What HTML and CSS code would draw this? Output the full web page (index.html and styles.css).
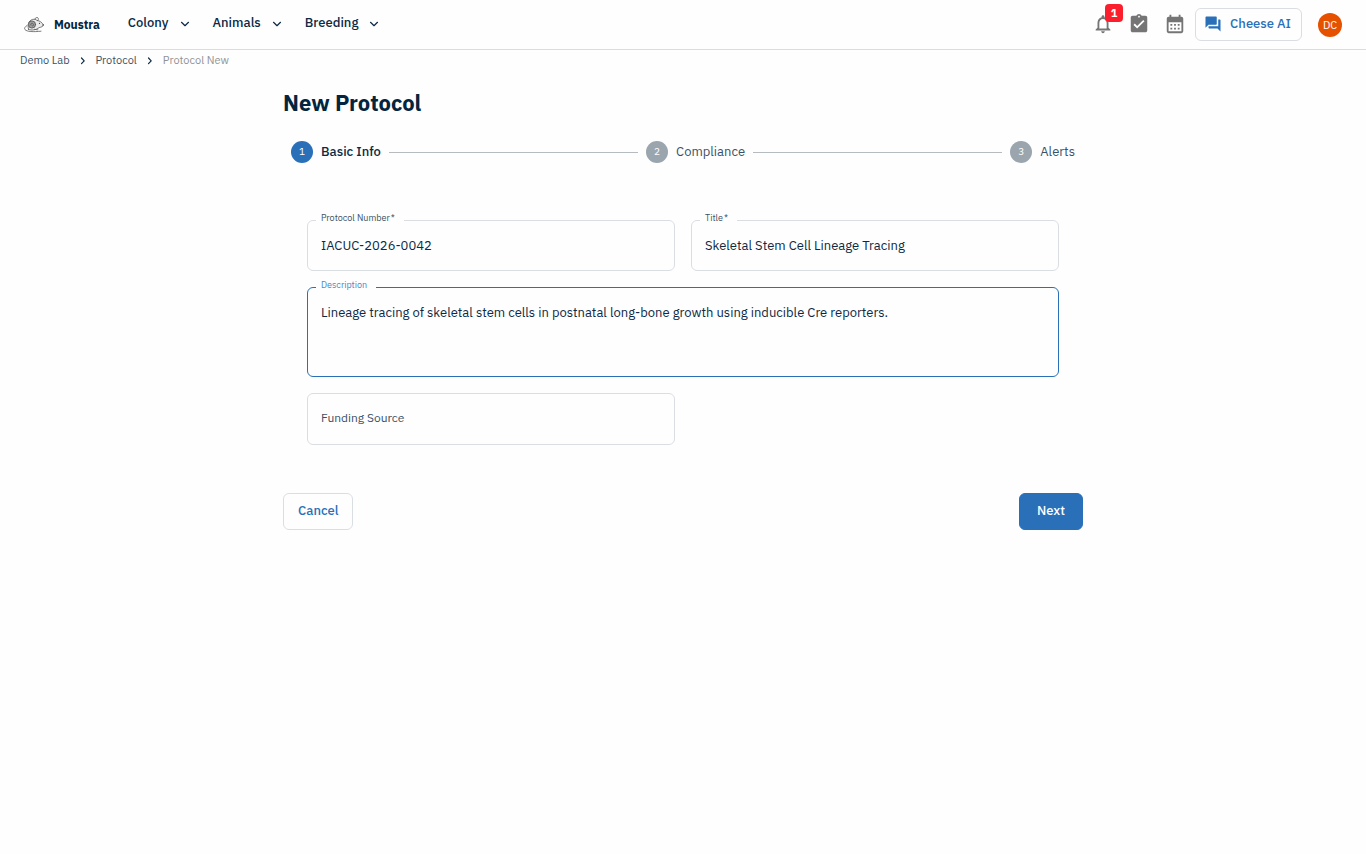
FILE: index.html
```html
<!DOCTYPE html>
<html lang="en">
<head>
<meta charset="utf-8">
<meta name="viewport" content="width=device-width, initial-scale=1">
<title>New Protocol - Moustra</title>
<link rel="stylesheet" href="styles.css">
</head>
<body>
<header class="topbar">
  <a class="brand" href="#">
    <svg class="brand-logo" viewBox="0 0 20 16" fill="none" stroke="#5a5a5a" stroke-linecap="round" aria-hidden="true">
      <path d="M3 8.500C.8 9.800 0 11.400 1 12.600c1.800 2.200 8.500 2.400 16 1.600" stroke-width=".8"/>
      <path d="M4.500 12.300C3 6.500 5.500 2.200 10.400 2.200c1.200.1 1.900.6 2.500 1.200 3 .2 5.200 2.400 6.600 4.500-.4 1.500-2.200 2.300-4.400 2.700-2.600 2.200-7.400 3.300-10.600 1.700z" fill="#ececec" stroke-width=".8"/>
      <circle cx="8" cy="7.500" r="3.600" fill="#a0a0a0" stroke-width=".9"/>
      <path d="M6.200 8c0-2.400 3.400-2.400 3.400-.2 0 1.600-2 1.500-2 .2M10.800 2.300c.2-2.200 3.400-2.400 3.600-.6.100 1-.4 1.600-1 2M10.500 12.300c1.200.2 2 .6 3.400.6" stroke-width=".8"/>
      <circle cx="15.500" cy="6.300" r=".6" fill="#333" stroke="none"/>
      <circle cx="19.100" cy="7.900" r=".7" fill="#333" stroke="none"/>
    </svg>
    <span>Moustra</span>
  </a>
  <nav class="menu" aria-label="Main">
    <button class="menu-item" type="button">Colony <svg class="chevron" viewBox="0 0 10 10" aria-hidden="true"><path d="M1.500 3.300 5 6.700l3.500-3.400"/></svg></button>
    <button class="menu-item" type="button">Animals <svg class="chevron" viewBox="0 0 10 10" aria-hidden="true"><path d="M1.500 3.300 5 6.700l3.500-3.400"/></svg></button>
    <button class="menu-item" type="button">Breeding <svg class="chevron" viewBox="0 0 10 10" aria-hidden="true"><path d="M1.500 3.300 5 6.700l3.500-3.400"/></svg></button>
  </nav>
  <div class="tools">
    <button class="icon-button" type="button" aria-label="Notifications">
      <svg viewBox="0 0 24 24" aria-hidden="true"><path d="M12 22c1.100 0 2-.9 2-2h-4c0 1.100.9 2 2 2m6-6v-5c0-3.070-1.630-5.640-4.500-6.320V4c0-.83-.67-1.500-1.500-1.500s-1.500.67-1.500 1.500v.68C7.640 5.360 6 7.920 6 11v5l-2 2v1h16v-1zm-2 1H8v-6c0-2.480 1.510-4.500 4-4.500s4 2.020 4 4.500z"/></svg>
      <span class="badge">1</span>
    </button>
    <button class="icon-button" type="button" aria-label="Tasks">
      <svg viewBox="0 0 24 24" aria-hidden="true"><path d="M19 3h-4.180C14.400 1.840 13.300 1 12 1s-2.400.84-2.820 2H5c-1.100 0-2 .9-2 2v14c0 1.100.9 2 2 2h14c1.100 0 2-.9 2-2V5c0-1.100-.9-2-2-2m-7 0c.55 0 1 .45 1 1s-.45 1-1 1-1-.45-1-1 .45-1 1-1m-2 14-4-4 1.410-1.410L10 14.170l6.590-6.590L18 9z"/></svg>
    </button>
    <button class="icon-button" type="button" aria-label="Calendar">
      <svg viewBox="0 0 24 24" aria-hidden="true"><path fill-rule="evenodd" d="M5 4h1V2h2v2h8V2h2v2h1a2 2 0 0 1 2 2v14a2 2 0 0 1-2 2H5a2 2 0 0 1-2-2V6a2 2 0 0 1 2-2M5 10v10h14V10zM7 12h2v2H7zm4 0h2v2h-2zm4 0h2v2h-2zM7 16h2v2H7zm4 0h2v2h-2zm4 0h2v2h-2z"/></svg>
    </button>
    <button class="button assistant" type="button">
      <svg viewBox="0 0 24 24" aria-hidden="true"><path d="M21 6h-2v9H6v2c0 .55.45 1 1 1h11l4 4V7c0-.55-.45-1-1-1m-4 6V3c0-.55-.45-1-1-1H3c-.55 0-1 .45-1 1v14l4-4h10c.55 0 1-.45 1-1"/></svg>
      Cheese AI
    </button>
    <button class="avatar" type="button" aria-label="Account DC">DC</button>
  </div>
</header>
<nav class="breadcrumbs" aria-label="Breadcrumb">
  <a href="#">Demo Lab</a>
  <svg class="chevron" viewBox="0 0 10 10" aria-hidden="true"><path d="M3.500 3 6.200 5.800l-2.700 2.800"/></svg>
  <a href="#">Protocol</a>
  <svg class="chevron" viewBox="0 0 10 10" aria-hidden="true"><path d="M3.500 3 6.200 5.800l-2.700 2.800"/></svg>
  <span class="current" aria-current="page">Protocol New</span>
</nav>
<main class="page">
  <h1>New Protocol</h1>
  <ol class="stepper">
    <li class="step active" aria-current="step"><span class="step-number">1</span>Basic Info</li>
    <li class="connector" role="presentation"></li>
    <li class="step"><span class="step-number">2</span>Compliance</li>
    <li class="connector" role="presentation"></li>
    <li class="step"><span class="step-number">3</span>Alerts</li>
  </ol>
  <form>
    <div class="fields">
      <fieldset class="field">
        <legend><label for="number">Protocol Number<span class="asterisk">*</span></label></legend>
        <input id="number" type="text" value="IACUC-2026-0042">
      </fieldset>
      <fieldset class="field">
        <legend><label for="title">Title<span class="asterisk">*</span></label></legend>
        <input id="title" type="text" value="Skeletal Stem Cell Lineage Tracing">
      </fieldset>
      <fieldset class="field wide focused">
        <legend><label for="description">Description</label></legend>
        <textarea id="description">Lineage tracing of skeletal stem cells in postnatal long-bone growth using inducible Cre reporters.</textarea>
      </fieldset>
      <div class="field inline-field">
        <label for="funding">Funding Source</label>
        <input id="funding" type="text">
      </div>
    </div>
    <div class="actions">
      <button class="button" type="button">Cancel</button>
      <button class="button primary" type="button">Next</button>
    </div>
  </form>
</main>
</body>
</html>
```
FILE: styles.css
```css
* { box-sizing: border-box; }
body {
  margin: 0;
  background: #fefefe;
  color: #0b2a45;
  font-family: "IBM Plex Sans", "Noto Sans", sans-serif;
  font-size: 13px;
  line-height: 20px;
}
button, input, textarea { font: inherit; color: inherit; }
button { cursor: pointer; }
a { color: inherit; text-decoration: none; }

.topbar {
  display: flex;
  align-items: center;
  height: 50px;
  padding: 0 24px;
  border-bottom: 1px solid #dadcdf;
  background: #fefefe;
}
.brand {
  display: flex;
  align-items: center;
  gap: 10px;
  color: #03253f;
  font-size: 12px;
  font-weight: 700;
}
.brand-logo { width: 20px; height: 16px; }
.menu { display: flex; gap: 23px; margin-left: 28px; padding-bottom: 3px; }
.menu-item {
  display: flex;
  align-items: center;
  gap: 11px;
  padding: 0;
  border: 0;
  background: none;
  font-weight: 500;
}
.chevron {
  width: 10px;
  height: 10px;
  fill: none;
  stroke: #0b2a45;
  stroke-width: 1.2;
  stroke-linecap: round;
  stroke-linejoin: round;
}
.menu .chevron { margin-top: 2px; }
.tools { display: flex; align-items: center; margin-left: auto; }
.icon-button {
  position: relative;
  display: flex;
  justify-content: center;
  width: 36px;
  padding: 0 0 2px;
  border: 0;
  background: none;
}
.icon-button svg { width: 22px; height: 22px; fill: #757575; }
.badge {
  position: absolute;
  top: -9px;
  right: -2px;
  width: 18px;
  height: 18px;
  border-radius: 4px;
  background: #fb1f2e;
  color: #fff;
  font-size: 11px;
  font-weight: 700;
  line-height: 18px;
}
.button {
  padding: 7px 14px 8px;
  border: 1px solid #dadee3;
  border-radius: 6px;
  background: #fefefe;
  color: #2970b9;
  font-weight: 500;
}
.primary { border-color: #2970b9; background: #2970b9; color: #fff; padding-inline: 17px; }
.assistant {
  display: flex;
  align-items: center;
  gap: 8px;
  margin-left: 2px;
  padding: 5px 10px 6px 8px;
}
.assistant svg { width: 18px; height: 18px; fill: #2970b9; }
.avatar {
  width: 24px;
  height: 24px;
  margin-left: 16px;
  padding: 0;
  border: 0;
  border-radius: 50%;
  background: #e65100;
  color: #fff;
  font-size: 11px;
  line-height: 22px;
}
.breadcrumbs {
  display: flex;
  align-items: center;
  gap: 8px;
  padding: 0 20px;
  color: #3b5166;
  font-size: 11px;
}
.current { color: #909396; }

.page { max-width: 800px; margin: 0 auto; padding-top: 16px; }
h1 { margin: 0; color: #03253f; font-size: 22px; line-height: 34px; font-weight: 700; }
.stepper {
  display: flex;
  align-items: center;
  gap: 8px;
  margin: 21px 0 0;
  padding: 0 8px;
  list-style: none;
}
.step { display: flex; align-items: center; gap: 8px; color: #3b5166; }
.active { color: #0b2a45; font-weight: 500; }
.step-number {
  width: 22px;
  height: 22px;
  border-radius: 50%;
  background: #9aa5ae;
  color: #fff;
  font-size: 10px;
  font-weight: 400;
  line-height: 22px;
  text-align: center;
}
.active .step-number { background: #2970b9; }
.connector { flex: 1; height: 1px; background: #b6bbbf; }

.fields {
  display: grid;
  grid-template-columns: 1fr 1fr;
  column-gap: 16px;
  padding: 50px 24px 0;
}
.field {
  min-width: 0;
  margin: 0 0 9px;
  padding: 0;
  border: 1px solid #dadee3;
  border-radius: 6px;
}
.wide { grid-column: 1 / -1; margin-bottom: 16px; }
.focused { border-color: #2970b9; }
legend {
  height: 15px;
  margin-left: 8px;
  padding: 0 9px 0 5px;
  color: #3b5166;
  font-size: 9px;
  line-height: 10px;
}
legend label { display: block; }
.focused legend { color: #4a86c8; }
.asterisk { margin-left: 1px; }
input, textarea {
  display: block;
  width: 100%;
  margin: 0;
  padding: 7px 13px 15px;
  border: 0;
  outline: 0;
  background: transparent;
}
input { height: 42px; }
textarea { height: 81px; padding-top: 8px; resize: none; }
.inline-field {
  display: flex;
  align-items: center;
  height: 52px;
  margin: 0;
  padding-left: 13px;
}
.inline-field label { flex: none; padding-bottom: 2px; color: #3b5166; font-size: 12px; }
.inline-field input { flex: 1; min-width: 0; }
.actions { display: flex; justify-content: space-between; margin-top: 48px; }
```
